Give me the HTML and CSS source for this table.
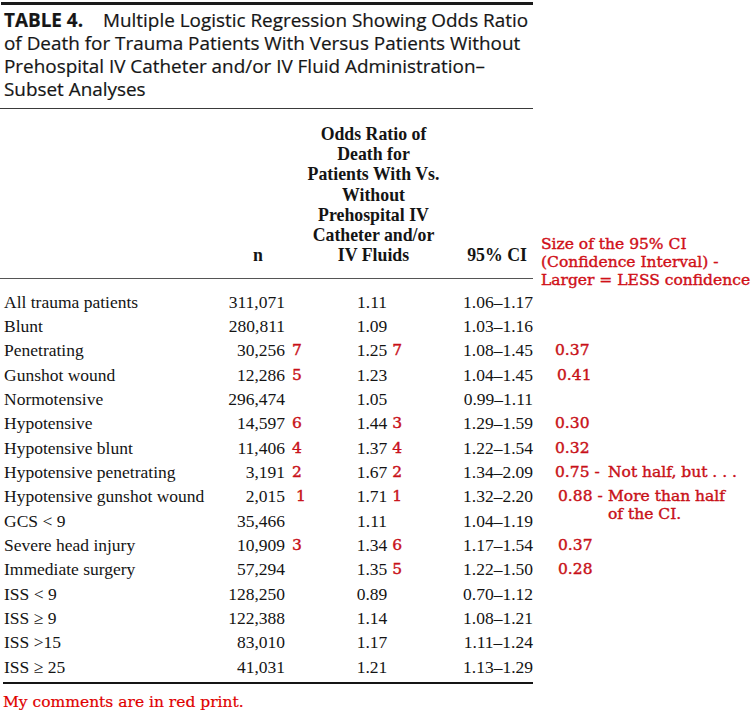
FILE: index.html
```html
<!DOCTYPE html>
<html>
<head>
<meta charset="utf-8">
<link rel="stylesheet" href="styles.css">
</head>
<body>
<div class="page">
  <div class="rule-top"></div>
  <h1 class="caption"><span class="tag">TABLE 4.</span><span class="tag-gap"></span>Multiple Logistic Regression Showing Odds Ratio<br>of Death for Trauma Patients With Versus Patients Without<br>Prehospital IV Catheter and/or IV Fluid Administration–<br>Subset Analyses</h1>
  <div class="rule-caption"></div>

  <div class="thead">
    <div class="thead-main">
      <div class="th th-label"></div>
      <div class="th th-n">n</div>
      <div class="th th-odds">Odds Ratio of<br>Death for<br>Patients With Vs.<br>Without<br>Prehospital IV<br>Catheter and/or<br>IV Fluids</div>
      <div class="th th-ci">95% CI</div>
    </div>
    <div class="note-head">Size of the 95% CI<br>(Confidence Interval) -<br>Larger = LESS confidence</div>
  </div>

  <div class="tbody">
    <div class="row"><div class="c-label">All trauma patients</div><div class="c-n">311,071</div><div class="c-nm"></div><div class="c-odds"><span class="v">1.11</span><span class="om"></span></div><div class="c-ci">1.06–1.17</div><div class="c-note"></div></div>
    <div class="row"><div class="c-label">Blunt</div><div class="c-n">280,811</div><div class="c-nm"></div><div class="c-odds"><span class="v">1.09</span><span class="om"></span></div><div class="c-ci">1.03–1.16</div><div class="c-note"></div></div>
    <div class="row"><div class="c-label">Penetrating</div><div class="c-n">30,256</div><div class="c-nm mk">7</div><div class="c-odds"><span class="v">1.25</span><span class="om mk">7</span></div><div class="c-ci">1.08–1.45</div><div class="c-note mk">0.37</div></div>
    <div class="row"><div class="c-label">Gunshot wound</div><div class="c-n">12,286</div><div class="c-nm mk">5</div><div class="c-odds"><span class="v">1.23</span><span class="om"></span></div><div class="c-ci">1.04–1.45</div><div class="c-note mk in2">0.41</div></div>
    <div class="row"><div class="c-label">Normotensive</div><div class="c-n">296,474</div><div class="c-nm"></div><div class="c-odds"><span class="v">1.05</span><span class="om"></span></div><div class="c-ci">0.99–1.11</div><div class="c-note"></div></div>
    <div class="row"><div class="c-label">Hypotensive</div><div class="c-n">14,597</div><div class="c-nm mk">6</div><div class="c-odds"><span class="v">1.44</span><span class="om mk">3</span></div><div class="c-ci">1.29–1.59</div><div class="c-note mk">0.30</div></div>
    <div class="row"><div class="c-label">Hypotensive blunt</div><div class="c-n">11,406</div><div class="c-nm mk">4</div><div class="c-odds"><span class="v">1.37</span><span class="om mk">4</span></div><div class="c-ci">1.22–1.54</div><div class="c-note mk">0.32</div></div>
    <div class="row"><div class="c-label">Hypotensive penetrating</div><div class="c-n">3,191</div><div class="c-nm mk">2</div><div class="c-odds"><span class="v">1.67</span><span class="om mk">2</span></div><div class="c-ci">1.34–2.09</div><div class="c-note mk"><div class="split"><span class="num">0.75 -</span><span class="txt">Not half, but . . .</span></div></div></div>
    <div class="row"><div class="c-label">Hypotensive gunshot wound</div><div class="c-n">2,015</div><div class="c-nm mk far">1</div><div class="c-odds"><span class="v">1.71</span><span class="om mk">1</span></div><div class="c-ci">1.32–2.20</div><div class="c-note mk in3"><div class="split narrow"><span class="num">0.88 -</span><span class="txt">More than half<br>of the CI.</span></div></div></div>
    <div class="row"><div class="c-label">GCS &lt; 9</div><div class="c-n">35,466</div><div class="c-nm"></div><div class="c-odds"><span class="v">1.11</span><span class="om"></span></div><div class="c-ci">1.04–1.19</div><div class="c-note"></div></div>
    <div class="row"><div class="c-label">Severe head injury</div><div class="c-n">10,909</div><div class="c-nm mk">3</div><div class="c-odds"><span class="v">1.34</span><span class="om mk">6</span></div><div class="c-ci">1.17–1.54</div><div class="c-note mk in3">0.37</div></div>
    <div class="row"><div class="c-label">Immediate surgery</div><div class="c-n">57,294</div><div class="c-nm"></div><div class="c-odds"><span class="v">1.35</span><span class="om mk">5</span></div><div class="c-ci">1.22–1.50</div><div class="c-note mk in3">0.28</div></div>
    <div class="row"><div class="c-label">ISS &lt; 9</div><div class="c-n">128,250</div><div class="c-nm"></div><div class="c-odds"><span class="v">0.89</span><span class="om"></span></div><div class="c-ci">0.70–1.12</div><div class="c-note"></div></div>
    <div class="row"><div class="c-label">ISS ≥ 9</div><div class="c-n">122,388</div><div class="c-nm"></div><div class="c-odds"><span class="v">1.14</span><span class="om"></span></div><div class="c-ci">1.08–1.21</div><div class="c-note"></div></div>
    <div class="row"><div class="c-label">ISS &gt;15</div><div class="c-n">83,010</div><div class="c-nm"></div><div class="c-odds"><span class="v">1.17</span><span class="om"></span></div><div class="c-ci">1.11–1.24</div><div class="c-note"></div></div>
    <div class="row"><div class="c-label">ISS ≥ 25</div><div class="c-n">41,031</div><div class="c-nm"></div><div class="c-odds"><span class="v">1.21</span><span class="om"></span></div><div class="c-ci">1.13–1.29</div><div class="c-note"></div></div>
  </div>
  <div class="rule-bottom"></div>
  <p class="footnote">My comments are in red print.</p>
</div>
</body>
</html>
```

FILE: styles.css
```css
html, body {
  margin: 0;
  padding: 0;
  background: #ffffff;
}

.page {
  width: 754px;
  padding-top: 2px;
  color: #141414;
  font-family: "Liberation Serif", "Times New Roman", serif;
}

.rule-top {
  width: 532px;
  margin-left: 1px;
  height: 2.5px;
  background: #1a1a1a;
}

.caption {
  margin: 0;
  padding: 4px 0 0 4px;
  width: 540px;
  font-family: "Open Sans", "Liberation Sans", sans-serif;
  font-weight: 400;
  font-size: 18.9px;
  line-height: 23.3px;
  color: #161616;
  white-space: nowrap;
  -webkit-text-stroke: 0.2px #161616;
}

.caption .tag {
  font-weight: 700;
}

.caption .tag-gap {
  display: inline-block;
  width: 20px;
}

.rule-caption {
  width: 533px;
  margin-top: 6px;
  height: 1px;
  background: #3a3a3a;
}

.thead {
  display: flex;
  align-items: flex-end;
}

.thead-main {
  width: 533px;
  flex: none;
  display: grid;
  grid-template-columns: 216px 69px 15px 147px 86px;
  align-items: end;
  padding: 15px 0 12px;
  border-bottom: 1px solid #555;
  font-weight: 700;
  font-size: 17.8px;
  line-height: 20.3px;
}

.th-n {
  text-align: right;
  padding-right: 37px;
  grid-column: 2 / 4;
}

.th-odds {
  text-align: center;
  grid-column: 4;
}

.th-ci {
  text-align: right;
  padding-right: 6px;
  grid-column: 5;
}

.note-head {
  margin: 0 0 -10px 8px;
  font-family: "DejaVu Serif", serif;
  font-size: 15.5px;
  line-height: 18px;
  color: #d01018;
  white-space: nowrap;
  -webkit-text-stroke: 0.4px #d01018;
}

.tbody {
  padding-top: 11px;
  padding-bottom: 3px;
}

.row {
  display: grid;
  grid-template-columns: 216px 69px 15px 147px 86px 221px;
  height: 24.33px;
  font-size: 17.5px;
  line-height: 24.33px;
  white-space: nowrap;
}

.c-label {
  padding-left: 4px;
}

.c-n {
  text-align: right;
}

.c-nm {
  padding-left: 7px;
}

.c-nm.far {
  padding-left: 11px;
}

.c-odds {
  display: grid;
  grid-template-columns: 1fr auto 1fr;
  padding-right: 3px;
}

.c-odds .v {
  grid-column: 2;
}

.c-odds .om {
  grid-column: 3;
  padding-left: 5px;
}

.c-ci {
  text-align: right;
}

.mk {
  font-family: "DejaVu Serif", serif;
  font-size: 15.5px;
  color: #c81018;
  -webkit-text-stroke: 0.4px #c81018;
}

.c-note {
  padding-left: 22px;
  overflow: visible;
}

.c-note.in2 {
  padding-left: 24px;
}

.c-note.in3 {
  padding-left: 25px;
}

.split {
  display: flex;
  padding-top: 3px;
  line-height: 18px;
}

.split .num {
  width: 53px;
  flex: none;
}

.split.narrow .num {
  width: 50px;
}

.rule-bottom {
  width: 530px;
  margin-left: 3px;
  height: 2px;
  background: #151515;
}

.footnote {
  margin: 9px 0 0 3px;
  font-family: "DejaVu Serif", serif;
  font-size: 15.5px;
  line-height: 18px;
  color: #e00000;
  -webkit-text-stroke: 0.2px #e00000;
}
```
